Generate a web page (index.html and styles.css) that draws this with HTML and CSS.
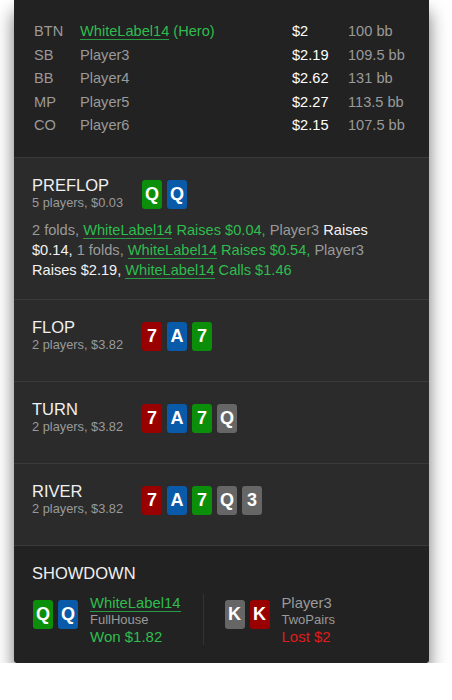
FILE: index.html
```html
<!DOCTYPE html>
<html lang="en">
<head>
    <meta charset="UTF-8">
    <meta name="viewport" content="width=device-width, initial-scale=1.0">
    <title>Hand History</title>
    <link rel="stylesheet" href="styles.css">
</head>
<body>
    <div class="hand">
        <div class="players">
            <div class="player-row">
                <span class="pos">BTN</span>
                <span class="name hero"><span class="link">WhiteLabel14</span> (Hero)</span>
                <span class="stack">$2</span>
                <span class="bb">100 bb</span>
            </div>
            <div class="player-row">
                <span class="pos">SB</span>
                <span class="name">Player3</span>
                <span class="stack">$2.19</span>
                <span class="bb">109.5 bb</span>
            </div>
            <div class="player-row">
                <span class="pos">BB</span>
                <span class="name">Player4</span>
                <span class="stack">$2.62</span>
                <span class="bb">131 bb</span>
            </div>
            <div class="player-row">
                <span class="pos">MP</span>
                <span class="name">Player5</span>
                <span class="stack">$2.27</span>
                <span class="bb">113.5 bb</span>
            </div>
            <div class="player-row">
                <span class="pos">CO</span>
                <span class="name">Player6</span>
                <span class="stack">$2.15</span>
                <span class="bb">107.5 bb</span>
            </div>
        </div>

        <div class="street">
            <div class="street-head">
                <div class="street-label">
                    <div class="street-name">PREFLOP</div>
                    <div class="street-info">5 players, $0.03</div>
                </div>
                <div class="cards">
                    <span class="card green">Q</span>
                    <span class="card blue">Q</span>
                </div>
            </div>
            <p class="actions">
                <span class="muted">2 folds,</span>
                <span class="hero"><span class="link">WhiteLabel14</span> Raises $0.04,</span>
                <span class="muted">Player3</span> <span class="bright">Raises $0.14,</span>
                <span class="muted">1 folds,</span>
                <span class="hero"><span class="link">WhiteLabel14</span> Raises $0.54,</span>
                <span class="muted">Player3</span> <span class="bright">Raises $2.19,</span>
                <span class="hero"><span class="link">WhiteLabel14</span> Calls $1.46</span>
            </p>
        </div>

        <div class="street">
            <div class="street-head">
                <div class="street-label">
                    <div class="street-name">FLOP</div>
                    <div class="street-info">2 players, $3.82</div>
                </div>
                <div class="cards">
                    <span class="card red">7</span>
                    <span class="card blue">A</span>
                    <span class="card green">7</span>
                </div>
            </div>
        </div>

        <div class="street">
            <div class="street-head">
                <div class="street-label">
                    <div class="street-name">TURN</div>
                    <div class="street-info">2 players, $3.82</div>
                </div>
                <div class="cards">
                    <span class="card red">7</span>
                    <span class="card blue">A</span>
                    <span class="card green">7</span>
                    <span class="card gray">Q</span>
                </div>
            </div>
        </div>

        <div class="street">
            <div class="street-head">
                <div class="street-label">
                    <div class="street-name">RIVER</div>
                    <div class="street-info">2 players, $3.82</div>
                </div>
                <div class="cards">
                    <span class="card red">7</span>
                    <span class="card blue">A</span>
                    <span class="card green">7</span>
                    <span class="card gray">Q</span>
                    <span class="card gray">3</span>
                </div>
            </div>
        </div>

        <div class="showdown">
            <div class="street-name">SHOWDOWN</div>
            <div class="results">
                <div class="result">
                    <div class="cards">
                        <span class="card green">Q</span>
                        <span class="card blue">Q</span>
                    </div>
                    <div class="result-info">
                        <div class="result-name hero"><span class="link">WhiteLabel14</span></div>
                        <div class="result-hand">FullHouse</div>
                        <div class="result-amount won">Won $1.82</div>
                    </div>
                </div>
                <div class="result">
                    <div class="cards">
                        <span class="card gray">K</span>
                        <span class="card red">K</span>
                    </div>
                    <div class="result-info">
                        <div class="result-name">Player3</div>
                        <div class="result-hand">TwoPairs</div>
                        <div class="result-amount lost">Lost $2</div>
                    </div>
                </div>
            </div>
        </div>
    </div>
</body>
</html>
```

FILE: styles.css
```css
body {
    margin: 0;
    background: #fff;
    font-family: "Liberation Sans", Arial, sans-serif;
}
.hand {
    width: 415px;
    margin-left: 14px;
    background: #2b2b2b;
    border-radius: 0 0 4px 4px;
    box-shadow: 0 12px 18px rgba(0, 0, 0, 0.55);
    overflow: hidden;
}
.players {
    background: #222;
    padding: 20px 18px 19px 20px;
    border-bottom: 1px solid #3a3a3a;
}
.player-row {
    display: grid;
    grid-template-columns: 46px 212px 56px auto;
    font-size: 14.6px;
    line-height: 23.5px;
    color: #9a9a9a;
}
.stack {
    color: #fff;
}
.hero {
    color: #2fbd4f;
}
.link {
    border-bottom: 1px solid #2a9a44;
}
.street {
    padding: 17px 18px 19px 18px;
    border-bottom: 1px solid #3a3a3a;
}
.street-head {
    display: flex;
    align-items: center;
    margin-bottom: 9px;
}
.street-label {
    width: 110px;
}
.street-name {
    font-size: 16.5px;
    line-height: 20px;
    color: #f0f0f0;
}
.street-info {
    font-size: 12.8px;
    line-height: 16px;
    color: #9a9a9a;
}
.cards {
    display: flex;
    gap: 5px;
    margin-top: 4px;
}
.card {
    width: 20px;
    height: 29px;
    border-radius: 3px;
    color: #fff;
    font-weight: bold;
    font-size: 18px;
    line-height: 29px;
    text-align: center;
}
.red {
    background: #990000;
}
.blue {
    background: #0a5aaa;
}
.green {
    background: #0b8f0b;
}
.gray {
    background: #666;
}
.actions {
    width: 375px;
    margin: 0;
    font-size: 14.6px;
    line-height: 20px;
}
.muted {
    color: #9a9a9a;
}
.bright {
    color: #f2f2f2;
}
.showdown {
    background: #222;
    padding: 17px 18px 18px 18px;
}
.results {
    display: flex;
    margin-top: 11px;
}
.result {
    display: flex;
    align-items: flex-start;
    gap: 12px;
    padding-right: 22px;
}
.result:first-child {
    padding-left: 1px;
}
.result + .result {
    border-left: 1px solid #333;
    padding-left: 21px;
}
.result .cards {
    margin-top: 6px;
}
.result-name {
    font-size: 14.8px;
    line-height: 18px;
    color: #9a9a9a;
}
.result-name.hero {
    color: #2fbd4f;
}
.result-hand {
    font-size: 13px;
    line-height: 16px;
    color: #9a9a9a;
}
.result-amount {
    font-size: 15px;
    line-height: 17px;
}
.won {
    color: #2fbd4f;
}
.lost {
    color: #e01b1b;
}
```
